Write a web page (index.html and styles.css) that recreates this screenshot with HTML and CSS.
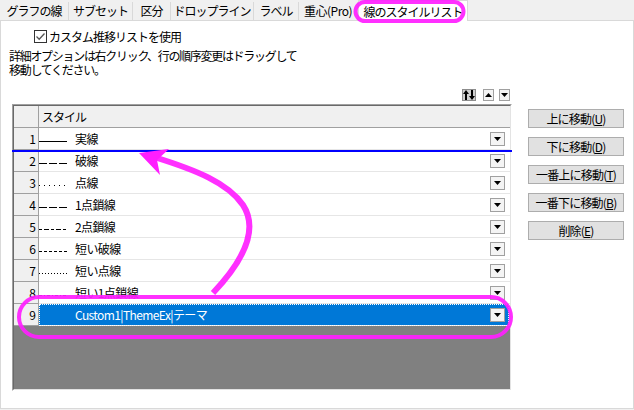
FILE: index.html
```html
<!DOCTYPE html>
<html lang="ja">
<head>
  <meta charset="UTF-8" />
  <title>線のスタイルリスト</title>
  <link rel="stylesheet" href="styles.css">
</head>
<body>
  <div class="window">
    <!-- Tab strip -->
    <div class="tabs">
      <div class="tab w1">グラフの線</div>
      <div class="tab w2">サブセット</div>
      <div class="tab w3">区分</div>
      <div class="tab w4">ドロップライン</div>
      <div class="tab w5">ラベル</div>
      <div class="tab w6">重心(Pro)</div>
      <div class="tab active">線のスタイルリスト</div>
    </div>

    <div class="panel">
      <label class="check-row">
        <span class="checkbox">
          <svg width="11" height="11" viewBox="0 0 11 11"><path d="M1.5 5.5 L4.2 8.2 L9.5 2.5" fill="none" stroke="#555" stroke-width="1.3"/></svg>
        </span>
        カスタム推移リストを使用
      </label>

      <p class="hint">詳細オプションは右クリック、行の順序変更はドラッグして<br>移動してください。</p>

      <div class="main">
        <div class="list-col">
          <div class="toolbar">
            <span class="tool pressed">
              <svg width="12" height="10" viewBox="0 0 12 10">
                <path d="M3 0 L6 4 L4 4 L4 10 L2 10 L2 4 L0 4 Z" fill="#000"/>
                <path d="M9 10 L12 6 L10 6 L10 0 L8 0 L8 6 L6 6 Z" fill="#000"/>
              </svg>
            </span>
            <span class="tool"><svg width="7" height="4" viewBox="0 0 7 4"><path d="M3.5 0 L7 4 L0 4 Z" fill="#000"/></svg></span>
            <span class="tool"><svg width="7" height="4" viewBox="0 0 7 4"><path d="M0 0 L7 0 L3.5 4 Z" fill="#000"/></svg></span>
          </div>

          <div class="grid">
            <div class="grid-body">
              <div class="grid-row head">
                <div class="num"></div>
                <div class="cell">スタイル</div>
              </div>

              <div class="grid-row">
                <div class="num">1</div>
                <div class="cell">
                  <svg class="sample" width="34" height="21"><line x1="0" y1="13.5" x2="28" y2="13.5" stroke="#000"/></svg>
                  <span class="label">実線</span>
                  <span class="drop"><svg width="7" height="4"><path d="M0 0 L7 0 L3.5 4 Z" fill="#000"/></svg></span>
                </div>
              </div>
              <div class="grid-row">
                <div class="num">2</div>
                <div class="cell">
                  <svg class="sample" width="34" height="21"><line x1="0" y1="13.5" x2="28" y2="13.5" stroke="#000" stroke-dasharray="8 2"/></svg>
                  <span class="label">破線</span>
                  <span class="drop"><svg width="7" height="4"><path d="M0 0 L7 0 L3.5 4 Z" fill="#000"/></svg></span>
                </div>
              </div>
              <div class="grid-row">
                <div class="num">3</div>
                <div class="cell">
                  <svg class="sample" width="34" height="21"><line x1="0" y1="13.5" x2="28" y2="13.5" stroke="#000" stroke-dasharray="1 4"/></svg>
                  <span class="label">点線</span>
                  <span class="drop"><svg width="7" height="4"><path d="M0 0 L7 0 L3.5 4 Z" fill="#000"/></svg></span>
                </div>
              </div>
              <div class="grid-row">
                <div class="num">4</div>
                <div class="cell">
                  <svg class="sample" width="34" height="21"><line x1="0" y1="13.5" x2="28" y2="13.5" stroke="#000" stroke-dasharray="8 2"/></svg>
                  <span class="label">1点鎖線</span>
                  <span class="drop"><svg width="7" height="4"><path d="M0 0 L7 0 L3.5 4 Z" fill="#000"/></svg></span>
                </div>
              </div>
              <div class="grid-row">
                <div class="num">5</div>
                <div class="cell">
                  <svg class="sample" width="34" height="21"><line x1="0" y1="13.5" x2="28" y2="13.5" stroke="#000" stroke-dasharray="3 2 5 2"/></svg>
                  <span class="label">2点鎖線</span>
                  <span class="drop"><svg width="7" height="4"><path d="M0 0 L7 0 L3.5 4 Z" fill="#000"/></svg></span>
                </div>
              </div>
              <div class="grid-row">
                <div class="num">6</div>
                <div class="cell">
                  <svg class="sample" width="34" height="21"><line x1="0" y1="13.5" x2="28" y2="13.5" stroke="#000" stroke-dasharray="3 2"/></svg>
                  <span class="label">短い破線</span>
                  <span class="drop"><svg width="7" height="4"><path d="M0 0 L7 0 L3.5 4 Z" fill="#000"/></svg></span>
                </div>
              </div>
              <div class="grid-row">
                <div class="num">7</div>
                <div class="cell">
                  <svg class="sample" width="34" height="21"><line x1="0" y1="13.5" x2="28" y2="13.5" stroke="#000" stroke-dasharray="1 2"/></svg>
                  <span class="label">短い点線</span>
                  <span class="drop"><svg width="7" height="4"><path d="M0 0 L7 0 L3.5 4 Z" fill="#000"/></svg></span>
                </div>
              </div>
              <div class="grid-row">
                <div class="num">8</div>
                <div class="cell">
                  <svg class="sample" width="34" height="21"><line x1="0" y1="13.5" x2="28" y2="13.5" stroke="#000" stroke-dasharray="3 2 1 2"/></svg>
                  <span class="label">短い1点鎖線</span>
                  <span class="drop"><svg width="7" height="4"><path d="M0 0 L7 0 L3.5 4 Z" fill="#000"/></svg></span>
                </div>
              </div>
              <div class="grid-row">
                <div class="num">9</div>
                <div class="cell selected">
                  <span class="sample"></span>
                  <span class="label">Custom1|ThemeEx|テーマ</span>
                  <span class="drop"><svg width="7" height="4"><path d="M0 0 L7 0 L3.5 4 Z" fill="#000"/></svg></span>
                </div>
              </div>

              <div class="grid-empty"></div>
            </div>
            <!-- drag insert marker -->
            <div class="drop-line"></div>
          </div>
        </div>

        <div class="side-buttons">
          <button class="btn">上に移動(<u>U</u>)</button>
          <button class="btn">下に移動(<u>D</u>)</button>
          <button class="btn">一番上に移動(<u>T</u>)</button>
          <button class="btn">一番下に移動(<u>B</u>)</button>
          <button class="btn">削除(<u>E</u>)</button>
        </div>
      </div>
    </div>

    <!-- highlight marks drawn over the dialog -->
    <svg class="marks" width="634" height="410" viewBox="0 0 634 410">
      <g fill="none" stroke="#ff1eff" stroke-opacity="0.92">
        <rect x="355.5" y="2" width="108" height="19" rx="9.5" stroke-width="4"/>
        <rect x="19" y="297" width="492" height="40" rx="20" stroke-width="4"/>
        <path d="M213 293 C 246 258 258 228 243 205 C 228 183 196 170 154 157" stroke-width="6"/>
      </g>
      <path d="M139 153 L169 149 L157 160 L160 175 Z" fill="#ff1eff"/>
    </svg>
  </div>
</body>
</html>
```

FILE: styles.css
```css
* {
  box-sizing: border-box;
}

body {
  margin: 0;
  background-color: #f0f0f0;
  font-family: "Noto Sans CJK JP", "Noto Sans", sans-serif;
  font-size: 12px;
  color: #000;
}

.window {
  position: relative;
  width: 634px;
  height: 410px;
}

/* tabs */
.tabs {
  display: flex;
  align-items: flex-end;
  height: 20px;
}

.tab {
  height: 18px;
  line-height: 17px;
  text-align: center;
  border-right: 1px solid #d9d9d9;
  letter-spacing: -1px;
  white-space: nowrap;
  overflow: hidden;
}

.tab.w1 { width: 69px; }
.tab.w2 { width: 64px; }
.tab.w3 { width: 38px; }
.tab.w4 { width: 83px; }
.tab.w5 { width: 45px; }
.tab.w6 { width: 59px; letter-spacing: -0.5px; }

.tab.active {
  position: relative;
  z-index: 1;
  width: 110px;
  height: 21px;
  margin-bottom: -1px;
  line-height: 21px;
  background-color: #fff;
  border: 1px solid #d9d9d9;
  border-bottom: none;
}

.panel {
  height: 389px;
  background-color: #fff;
  border: 1px solid #d9d9d9;
}

.check-row {
  display: flex;
  align-items: center;
  height: 14px;
  margin: 8px 0 0 33px;
  letter-spacing: -1px;
}

.checkbox {
  display: flex;
  align-items: center;
  justify-content: center;
  width: 13px;
  height: 13px;
  margin-right: 2px;
  border: 1px solid #333;
  background-color: #fff;
}

.hint {
  margin: 7px 0 0 8px;
  font-family: "Liberation Sans", "Noto Sans CJK JP", sans-serif;
  line-height: 14px;
  letter-spacing: -1.3px;
}

.main {
  display: flex;
  margin: 11px 0 0 11px;
}

.list-col {
  width: 500px;
}

.toolbar {
  display: flex;
  justify-content: flex-end;
  gap: 5px;
  height: 12px;
  margin-bottom: 3px;
  padding-right: 2px;
}

.tool {
  display: flex;
  align-items: center;
  justify-content: center;
  width: 11px;
  height: 12px;
  background-color: #f4f4f4;
  border: 1px solid #a0a0a0;
}

.tool.pressed {
  width: 14px;
  margin-right: 2px;
  background-color: #cfcfcf;
  border-color: #8c8c8c;
}

/* grid */
.grid {
  position: relative;
  height: 287px;
  border: 1px solid;
  border-color: #a0a0a0 #fff #fff #a0a0a0;
}

.grid-body {
  display: flex;
  flex-direction: column;
  height: 100%;
  border: 1px solid;
  border-color: #696969 #e3e3e3 #e3e3e3 #696969;
  background-color: #fff;
}

.grid-row {
  display: flex;
  height: 22px;
}

.num {
  width: 25px;
  padding-right: 2px;
  line-height: 21px;
  text-align: right;
  background-color: #f0f0f0;
  border-right: 1px solid #a0a0a0;
  border-bottom: 1px solid #a0a0a0;
}

.cell {
  position: relative;
  display: flex;
  align-items: center;
  flex: 1;
  border-bottom: 1px solid #e6e6e6;
}

.head .cell {
  padding-left: 3px;
  background-color: #f0f0f0;
  border-bottom-color: #a0a0a0;
  letter-spacing: -1px;
}

.sample {
  flex: none;
  width: 36px;
  height: 21px;
}

.label {
  flex: 1;
  letter-spacing: -0.6px;
}

.drop {
  display: flex;
  align-items: center;
  justify-content: center;
  width: 15px;
  height: 14px;
  margin-right: 5px;
  background-color: #f4f4f4;
  border: 1px solid #a0a0a0;
}

.cell.selected {
  color: #fff;
  background-color: #0078d7;
  outline: 1px dotted #fff;
  outline-offset: -1px;
  margin-right: 1px;
}

.cell.selected .drop {
  margin-right: 4px;
}

.grid-empty {
  flex: 1;
  background-color: #808080;
}

.drop-line {
  position: absolute;
  top: 45px;
  left: -1px;
  width: 500px;
  height: 2px;
  background-color: #0000ff;
}

/* buttons on the right */
.side-buttons {
  display: flex;
  flex-direction: column;
  gap: 9px;
  width: 96px;
  margin-left: 16px;
  padding-top: 20px;
}

.btn {
  height: 19px;
  padding: 0;
  font-family: inherit;
  font-size: 12px;
  line-height: 17px;
  letter-spacing: -0.8px;
  color: #000;
  background-color: #e1e1e1;
  border: 1px solid #adadad;
}

.marks {
  position: absolute;
  top: 0;
  left: 0;
  z-index: 5;
  pointer-events: none;
}
```
